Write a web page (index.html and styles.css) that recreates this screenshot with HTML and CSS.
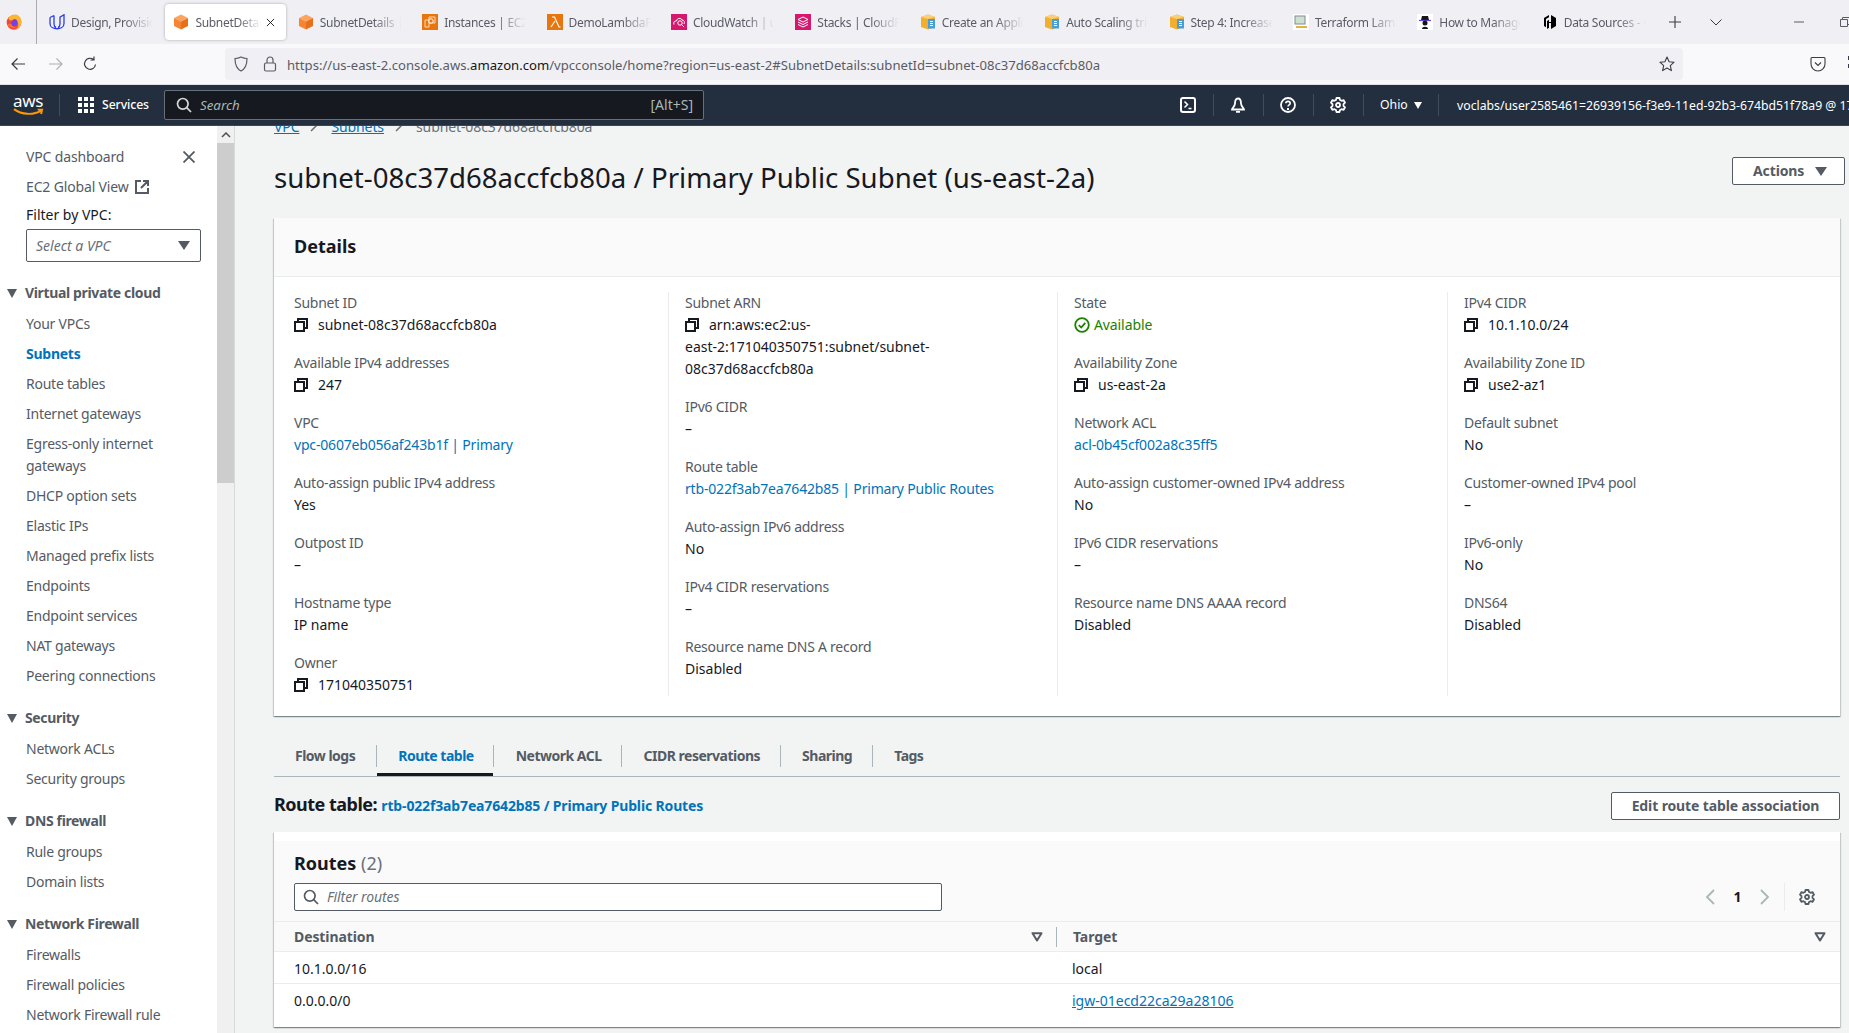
FILE: index.html
```html
<!doctype html>
<html>

<head>
    <meta charset="utf-8">
    <title>SubnetDetails | VPC Console</title>
    <link rel="stylesheet" href="styles.css">
</head>

<body>
    <svg class="defs" width="0" height="0">
        <symbol id="i-cube" viewBox="0 0 16 16">
            <polygon points="8,0.5 15,4 8,7.5 1,4" fill="#ffa45c" />
            <polygon points="1,4 8,7.5 8,15.5 1,12" fill="#f58534" />
            <polygon points="15,4 8,7.5 8,15.5 15,12" fill="#e8701a" />
        </symbol>
        <symbol id="i-doc" viewBox="0 0 16 16">
            <polygon points="8,0.5 15,3 15,13 8,15.5 1,13 1,3" fill="#f2ae2c" />
            <polygon points="8,0.5 15,3 8,5 1,3" fill="#f9cf7c" />
            <rect x="8" y="5" width="7" height="9.5" fill="#4a9ed6" />
            <path d="M10 7.5h3M10 9.5h3M10 11.5h3" stroke="#fff" stroke-width="1" />
        </symbol>
        <symbol id="i-copy" viewBox="0 0 14 14">
            <path d="M4 4V1h9v9h-3" fill="none" stroke="#16191f" stroke-width="2" />
            <rect x="1" y="4" width="9" height="9" fill="none" stroke="#16191f" stroke-width="2" />
        </symbol>
        <symbol id="i-gear" viewBox="0 0 16 16">
            <path d="M6.5 1h3l.5 2 1.6.8 2-.7 1.4 2.6-1.5 1.4v1.8l1.5 1.4-1.4 2.6-2-.7-1.6.8-.5 2h-3l-.5-2-1.6-.8-2 .7L1 10.300l1.500-1.400V7.100L1 5.700l1.400-2.600 2 .7L6 3z" fill="none" stroke="currentColor" stroke-width="1.800" stroke-linejoin="round" />
            <circle cx="8" cy="8" r="2" fill="none" stroke="currentColor" stroke-width="1.800" />
        </symbol>
        <symbol id="i-search" viewBox="0 0 16 16">
            <circle cx="6.800" cy="6.800" r="5.300" fill="none" stroke="currentColor" stroke-width="1.700" />
            <path d="M10.700 10.700 15 15" stroke="currentColor" stroke-width="1.700" />
        </symbol>
        <symbol id="i-sort" viewBox="0 0 12 10">
            <path d="M1.500 1.200h9L6 8.500z" fill="none" stroke="#545b64" stroke-width="2" stroke-linejoin="round" />
        </symbol>
    </svg>

    <div class="tabbar">
        <div class="ff-logo">
            <svg width="16" height="16" viewBox="0 0 17 17">
                <circle cx="8.500" cy="9" r="7.800" fill="#f2473f" />
                <path d="M2.500 5C4 .5 11 -.5 13 1.500c3 2 4 6 3 9-1 3-3 5-5.500 5.800 3-2.300 3.500-6.500.5-9-2-1.500-4.500-1.500-6 0z" fill="#ffb52e" />
                <path d="M8.500 5.300a3.800 3.800 0 1 1-3.700 4.500z" fill="#7542e5" />
                <path d="M1.500 11c1.500 3 6 5 9.500 3-3 0-5-1.500-5.500-4z" fill="#ff7139" />
            </svg>
        </div>

        <div class="tab">
            <svg class="tab-icon" viewBox="0 0 16 16">
                <path d="M1 3.500v6c0 7 14 7 14 0V.8l-4 2.400V10c0 1.800-.8 3-2 3.600M5 1.500v8.500c0 1.800.8 3 2 3.600M1 3.500l4-2" fill="none" stroke="#2b3de8" stroke-width="1.300" />
            </svg>
            <span class="tab-title">Design, Provisio</span>
        </div>
        <div class="tab tab-active">
            <svg class="tab-icon"><use href="#i-cube" /></svg>
            <span class="tab-title">SubnetDetail</span>
            <svg class="tab-close" viewBox="0 0 10 10"><path d="M1 1l8 8M9 1l-8 8" stroke="#15141a" stroke-width="1" /></svg>
        </div>
        <div class="tab">
            <svg class="tab-icon"><use href="#i-cube" /></svg>
            <span class="tab-title">SubnetDetails |</span>
        </div>
        <div class="tab">
            <svg class="tab-icon" viewBox="0 0 16 16">
                <rect width="16" height="16" fill="#e8760f" />
                <path d="M3 6h4v7H3zM7 3h6v6H7z" fill="none" stroke="#ffd9b5" stroke-width="1" />
                <circle cx="9" cy="7" r="2.200" fill="#e8760f" stroke="#fff" stroke-width="1" />
            </svg>
            <span class="tab-title">Instances | EC2</span>
        </div>
        <div class="tab">
            <svg class="tab-icon" viewBox="0 0 16 16">
                <rect width="16" height="16" fill="#e8760f" />
                <path d="M5 3h2.500L12 13h1.500M8 7l-4 6" fill="none" stroke="#fff" stroke-width="1.100" />
            </svg>
            <span class="tab-title">DemoLambdaF</span>
        </div>
        <div class="tab">
            <svg class="tab-icon" viewBox="0 0 16 16">
                <rect width="16" height="16" fill="#d6176e" />
                <path d="M3 10.500c-1-2 .5-4 2.500-3.500C6 4 10 3.500 11 6c2 0 3 2 2 4" fill="none" stroke="#fff" stroke-width="1" />
                <circle cx="9" cy="9" r="2.200" fill="none" stroke="#fff" stroke-width="1" />
                <path d="M10.500 10.500 13 13" stroke="#fff" stroke-width="1" />
            </svg>
            <span class="tab-title">CloudWatch | u</span>
        </div>
        <div class="tab">
            <svg class="tab-icon" viewBox="0 0 16 16">
                <rect width="16" height="16" fill="#d6176e" />
                <path d="M8 3l5 2.500L8 8 3 5.500zM3 8l5 2.500L13 8M3 10.500 8 13l5-2.500" fill="none" stroke="#fff" stroke-width="1" />
            </svg>
            <span class="tab-title">Stacks | CloudF</span>
        </div>
        <div class="tab">
            <svg class="tab-icon"><use href="#i-doc" /></svg>
            <span class="tab-title">Create an Appli</span>
        </div>
        <div class="tab">
            <svg class="tab-icon"><use href="#i-doc" /></svg>
            <span class="tab-title">Auto Scaling tri</span>
        </div>
        <div class="tab">
            <svg class="tab-icon"><use href="#i-doc" /></svg>
            <span class="tab-title">Step 4: Increase</span>
        </div>
        <div class="tab">
            <svg class="tab-icon" viewBox="0 0 16 16">
                <rect width="16" height="16" fill="#fff" />
                <rect x="2" y="2" width="10" height="8" fill="#cfe0d0" stroke="#7d8c9a" stroke-width="1" />
                <path d="M3 13h11" stroke="#e3b341" stroke-width="2" />
            </svg>
            <span class="tab-title">Terraform Lamb</span>
        </div>
        <div class="tab">
            <svg class="tab-icon" viewBox="0 0 16 16">
                <rect width="16" height="16" fill="#fff" />
                <path d="M5 2h6l1 4H4z" fill="#14161a" />
                <path d="M2 6.500h12" stroke="#6a3fd6" stroke-width="1.200" />
                <circle cx="8" cy="9" r="2.500" fill="#14161a" />
                <path d="M5 15c0-3 6-3 6 0z" fill="#14161a" />
            </svg>
            <span class="tab-title">How to Manage</span>
        </div>
        <div class="tab">
            <svg class="tab-icon" viewBox="0 0 16 16">
                <path d="M7 1 2 4v8l2 1.200V5l3-1.800zM9 1l5 3v8l-5 3V9H7v4.800l-2 1.200V7l2-1.200V8h2z" fill="#000" />
            </svg>
            <span class="tab-title">Data Sources - C</span>
        </div>

        <svg class="tab-new" viewBox="0 0 12 12"><path d="M6 0v12M0 6h12" stroke="#3a3a44" stroke-width="1.100" /></svg>
        <svg class="tab-list" viewBox="0 0 12 7"><path d="M.5.500 6 6l5.500-5.500" fill="none" stroke="#3a3a44" stroke-width="1" /></svg>
        <svg class="win-min" viewBox="0 0 10 2"><path d="M0 1h10" stroke="#5b5b66" stroke-width="1" /></svg>
        <svg class="win-max" viewBox="0 0 10 10"><path d="M.5 2.500h7v7h-7zM2.500 2.500v-2h7v7h-2" fill="none" stroke="#5b5b66" stroke-width="1" /></svg>
    </div>

    <div class="toolbar">
        <svg class="tool-back" viewBox="0 0 16 16"><path d="M15 8H2M7.500 2.500 2 8l5.500 5.500" fill="none" stroke="#3a3a44" stroke-width="1.200" /></svg>
        <svg class="tool-forward" viewBox="0 0 16 16"><path d="M1 8h13M8.500 2.500 14 8l-5.500 5.500" fill="none" stroke="#b0b0b6" stroke-width="1.200" /></svg>
        <svg class="tool-reload" viewBox="0 0 16 16"><path d="M13.500 8.500a5.500 5.500 0 1 1-2-5M12 .5v3.500H8.500" fill="none" stroke="#3a3a44" stroke-width="1.200" /></svg>
        <div class="urlbar">
            <svg class="url-shield" viewBox="0 0 16 16"><path d="M8 1c2 1 4 1.500 6 1.500 0 6-1 10-6 12.500C3 12.500 2 8.500 2 2.500 4 2.500 6 2 8 1z" fill="none" stroke="#5b5b66" stroke-width="1.200" /></svg>
            <svg class="url-lock" viewBox="0 0 16 16"><rect x="2.500" y="7" width="11" height="8" rx="1.500" fill="none" stroke="#5b5b66" stroke-width="1.200" /><path d="M5 7V4a3 3 0 0 1 6 0v3" fill="none" stroke="#5b5b66" stroke-width="1.200" /></svg>
            <span class="url-text">https://us-east-2.console.aws.<b>amazon.com</b>/vpcconsole/home?region=us-east-2#SubnetDetails:subnetId=subnet-08c37d68accfcb80a</span>
            <svg class="url-star" viewBox="0 0 16 16"><path d="M8 1l2.100 4.700 5 .5-3.800 3.400 1.100 5L8 12l-4.400 2.600 1.100-5L.9 6.200l5-.5z" fill="none" stroke="#3a3a44" stroke-width="1.100" stroke-linejoin="round" /></svg>
        </div>
        <svg class="tool-pocket" viewBox="0 0 16 16"><path d="M2 1.500h12a1 1 0 0 1 1 1V8a7 7 0 0 1-14 0V2.500a1 1 0 0 1 1-1z" fill="none" stroke="#3a3a44" stroke-width="1.100" /><path d="M5 6.500 8 9.500l3-3" fill="none" stroke="#3a3a44" stroke-width="1.100" /></svg>
        <svg class="tool-extra" viewBox="0 0 16 16"><path d="M0 0h4v4H0zM0 8h4v4H0z" fill="#3a3a44" /></svg>
    </div>

    <nav class="awsnav">
        <div class="aws-logo">
            <span>aws</span>
            <svg viewBox="0 0 32 9"><path d="M1 1c8 6 20 6.500 28 1.500M25.500 1.500l4.500 0-1 4.500" fill="none" stroke="#f90" stroke-width="2" /></svg>
        </div>
        <svg class="nav-grid" viewBox="0 0 16 16">
            <path d="M0 0h4v4H0zM6 0h4v4H6zM12 0h4v4h-4zM0 6h4v4H0zM6 6h4v4H6zM12 6h4v4h-4zM0 12h4v4H0zM6 12h4v4H6zM12 12h4v4h-4z" fill="#fff" />
        </svg>
        <span class="nav-services">Services</span>
        <div class="nav-search">
            <svg class="icon-16"><use href="#i-search" /></svg>
            <span class="nav-placeholder">Search</span>
            <span class="nav-shortcut">[Alt+S]</span>
        </div>
        <div class="nav-tools">
            <div class="nav-tool">
                <svg class="icon-16" viewBox="0 0 16 16"><rect x="1" y="1" width="14" height="14" rx="2" fill="none" stroke="#fff" stroke-width="2" /><path d="M4.500 4.500 7.500 7.500l-3 3M8.500 11.500h3" fill="none" stroke="#fff" stroke-width="1.500" /></svg>
            </div>
            <div class="nav-tool">
                <svg class="icon-16" viewBox="0 0 16 16"><path d="M8 1.500c2.500 0 3 2.500 3 5 0 2.500 3 5 3 6H2c0-1 3-3.500 3-6 0-2.500.5-5 3-5zM6 14.800h4" fill="none" stroke="#fff" stroke-width="1.800" /></svg>
            </div>
            <div class="nav-tool">
                <svg class="icon-16" viewBox="0 0 16 16"><circle cx="8" cy="8" r="7" fill="none" stroke="#fff" stroke-width="1.800" /><path d="M5.800 6.200C6 3.800 10.200 3.800 10.200 6.200c0 1.600-2.200 1.600-2.200 3.300" fill="none" stroke="#fff" stroke-width="1.600" /><path d="M7 11h2v2H7z" fill="#fff" /></svg>
            </div>
            <div class="nav-tool">
                <svg class="icon-16 nav-gear"><use href="#i-gear" /></svg>
            </div>
            <div class="nav-tool nav-region">Ohio<i class="tri tri-white"></i></div>
            <div class="nav-account">voclabs/user2585461=26939156-f3e9-11ed-92b3-674bd51f78a9 @ 1710-4035-0751</div>
        </div>
    </nav>

    <div class="main">
        <aside class="side">
            <div class="side-row">
                <a class="side-link">VPC dashboard</a>
                <svg class="side-close" viewBox="0 0 12 12"><path d="M.5.500l11 11M11.500.500l-11 11" stroke="#545b64" stroke-width="1.800" /></svg>
            </div>
            <a class="side-link side-ec2">EC2 Global View
                <svg class="side-ext" viewBox="0 0 14 14"><path d="M6 1H1v12h12V8M8 1h5v5M13 1 6 8" fill="none" stroke="#545b64" stroke-width="2" /></svg>
            </a>
            <div class="side-filter">Filter by VPC:</div>
            <div class="side-select">
                <span>Select a VPC</span>
                <i class="tri tri-grey"></i>
            </div>

            <div class="side-title"><i class="tri tri-grey"></i>Virtual private cloud</div>
            <ul class="side-list">
                <li>Your VPCs</li>
                <li class="side-active">Subnets</li>
                <li>Route tables</li>
                <li>Internet gateways</li>
                <li>Egress-only internet gateways</li>
                <li>DHCP option sets</li>
                <li>Elastic IPs</li>
                <li>Managed prefix lists</li>
                <li>Endpoints</li>
                <li>Endpoint services</li>
                <li>NAT gateways</li>
                <li>Peering connections</li>
            </ul>

            <div class="side-title"><i class="tri tri-grey"></i>Security</div>
            <ul class="side-list">
                <li>Network ACLs</li>
                <li>Security groups</li>
            </ul>

            <div class="side-title"><i class="tri tri-grey"></i>DNS firewall</div>
            <ul class="side-list">
                <li>Rule groups</li>
                <li>Domain lists</li>
            </ul>

            <div class="side-title"><i class="tri tri-grey"></i>Network Firewall</div>
            <ul class="side-list">
                <li>Firewalls</li>
                <li>Firewall policies</li>
                <li>Network Firewall rule</li>
            </ul>
        </aside>

        <div class="scrollbar">
            <div class="scroll-up">
                <svg viewBox="0 0 10 6"><path d="M1 5l4-4 4 4" fill="none" stroke="#505050" stroke-width="1.500" /></svg>
            </div>
            <div class="scroll-thumb"></div>
        </div>

        <div class="content">
            <div class="crumbs">
                <a class="link">VPC</a>
                <svg class="crumb-sep" viewBox="0 0 10 10"><path d="M1 9 9 1" stroke="#687078" stroke-width="1.500" /></svg>
                <a class="link">Subnets</a>
                <svg class="crumb-sep" viewBox="0 0 10 10"><path d="M1 9 9 1" stroke="#687078" stroke-width="1.500" /></svg>
                <span>subnet-08c37d68accfcb80a</span>
            </div>

            <div class="page-head">
                <h1>subnet-08c37d68accfcb80a / Primary Public Subnet (us-east-2a)</h1>
                <button class="btn btn-actions" type="button">Actions<i class="tri tri-grey"></i></button>
            </div>

            <section class="card">
                <h2 class="card-head">Details</h2>
                <div class="detail-grid">
                    <div class="detail-col">
                        <div class="kv"><label>Subnet ID</label><div><svg class="copy"><use href="#i-copy" /></svg>subnet-08c37d68accfcb80a</div></div>
                        <div class="kv"><label>Available IPv4 addresses</label><div><svg class="copy"><use href="#i-copy" /></svg>247</div></div>
                        <div class="kv"><label>VPC</label><div><a class="link-plain">vpc-0607eb056af243b1f | Primary</a></div></div>
                        <div class="kv"><label>Auto-assign public IPv4 address</label><div>Yes</div></div>
                        <div class="kv"><label>Outpost ID</label><div>–</div></div>
                        <div class="kv"><label>Hostname type</label><div>IP name</div></div>
                        <div class="kv"><label>Owner</label><div><svg class="copy"><use href="#i-copy" /></svg>171040350751</div></div>
                    </div>
                    <div class="detail-col">
                        <div class="kv"><label>Subnet ARN</label><div><svg class="copy"><use href="#i-copy" /></svg>arn:aws:ec2:us-<br>east-2:171040350751:subnet/subnet-<br>08c37d68accfcb80a</div></div>
                        <div class="kv"><label>IPv6 CIDR</label><div>–</div></div>
                        <div class="kv"><label>Route table</label><div><a class="link-plain">rtb-022f3ab7ea7642b85 | Primary Public Routes</a></div></div>
                        <div class="kv"><label>Auto-assign IPv6 address</label><div>No</div></div>
                        <div class="kv"><label>IPv4 CIDR reservations</label><div>–</div></div>
                        <div class="kv"><label>Resource name DNS A record</label><div>Disabled</div></div>
                    </div>
                    <div class="detail-col">
                        <div class="kv"><label>State</label><div class="state">
                            <svg class="state-icon" viewBox="0 0 16 16"><circle cx="8" cy="8" r="6.800" fill="none" stroke="#1d8102" stroke-width="1.800" /><path d="M4.800 8.200 7.200 10.500 11.300 5.800" fill="none" stroke="#1d8102" stroke-width="1.800" /></svg>Available</div></div>
                        <div class="kv"><label>Availability Zone</label><div><svg class="copy"><use href="#i-copy" /></svg>us-east-2a</div></div>
                        <div class="kv"><label>Network ACL</label><div><a class="link-plain">acl-0b45cf002a8c35ff5</a></div></div>
                        <div class="kv"><label>Auto-assign customer-owned IPv4 address</label><div>No</div></div>
                        <div class="kv"><label>IPv6 CIDR reservations</label><div>–</div></div>
                        <div class="kv"><label>Resource name DNS AAAA record</label><div>Disabled</div></div>
                    </div>
                    <div class="detail-col">
                        <div class="kv"><label>IPv4 CIDR</label><div><svg class="copy"><use href="#i-copy" /></svg>10.1.10.0/24</div></div>
                        <div class="kv"><label>Availability Zone ID</label><div><svg class="copy"><use href="#i-copy" /></svg>use2-az1</div></div>
                        <div class="kv"><label>Default subnet</label><div>No</div></div>
                        <div class="kv"><label>Customer-owned IPv4 pool</label><div>–</div></div>
                        <div class="kv"><label>IPv6-only</label><div>No</div></div>
                        <div class="kv"><label>DNS64</label><div>Disabled</div></div>
                    </div>
                </div>
            </section>

            <div class="tabs">
                <a class="tabs-item">Flow logs</a>
                <a class="tabs-item tabs-active">Route table</a>
                <a class="tabs-item">Network ACL</a>
                <a class="tabs-item">CIDR reservations</a>
                <a class="tabs-item">Sharing</a>
                <a class="tabs-item">Tags</a>
            </div>

            <div class="rt-head">
                <div class="rt-title">Route table: <a class="link-plain">rtb-022f3ab7ea7642b85 / Primary Public Routes</a></div>
                <button class="btn btn-edit" type="button">Edit route table association</button>
            </div>

            <section class="card routes">
                <div class="routes-head">
                    <div class="routes-title">Routes <span>(2)</span></div>
                    <div class="routes-filter">
                        <div class="filter-input">
                            <svg class="icon-16"><use href="#i-search" /></svg>
                            <span>Filter routes</span>
                        </div>
                        <div class="pager">
                            <svg class="pager-arrow" viewBox="0 0 10 16"><path d="M9 1 2 8l7 7" fill="none" stroke="#aab7b8" stroke-width="1.800" /></svg>
                            <b>1</b>
                            <svg class="pager-arrow" viewBox="0 0 10 16"><path d="M1 1l7 7-7 7" fill="none" stroke="#aab7b8" stroke-width="1.800" /></svg>
                            <i class="pager-sep"></i>
                            <svg class="icon-16 pager-gear"><use href="#i-gear" /></svg>
                        </div>
                    </div>
                </div>
                <div class="rt-row rt-thead">
                    <div class="rt-dest">Destination<svg class="sort"><use href="#i-sort" /></svg></div>
                    <div class="rt-target">Target<svg class="sort"><use href="#i-sort" /></svg></div>
                </div>
                <div class="rt-row">
                    <div class="rt-dest">10.1.0.0/16</div>
                    <div class="rt-target">local</div>
                </div>
                <div class="rt-row rt-last">
                    <div class="rt-dest">0.0.0.0/0</div>
                    <div class="rt-target"><a class="link">igw-01ecd22ca29a28106</a></div>
                </div>
            </section>
        </div>
    </div>
</body>

</html>
```

FILE: styles.css
```css
* {
    box-sizing: border-box;
}

html,
body {
    height: 100%;
}

body {
    margin: 0;
    overflow: hidden;
    background: #f2f3f3;
    color: #16191f;
    font: 14px/22px "Noto Sans", sans-serif;
}

.defs {
    display: block;
    height: 0;
}

.icon-16 {
    width: 16px;
    height: 16px;
    flex: none;
}

.tri {
    display: inline-block;
    flex: none;
    width: 0;
    height: 0;
    border-left: 6px solid transparent;
    border-right: 6px solid transparent;
}

.tri-grey {
    border-top: 9px solid #545b64;
}

.tri-white {
    border-left-width: 4px;
    border-right-width: 4px;
    border-top: 7px solid #fff;
}

/* browser chrome */
.tabbar {
    display: flex;
    align-items: center;
    height: 44px;
    background: #f0f0f4;
    font: 12px/16px "Noto Sans", sans-serif;
    letter-spacing: -.3px;
    color: #5b5b66;
}

.ff-logo {
    display: flex;
    flex: none;
    align-items: center;
    width: 37px;
    height: 44px;
    padding-left: 6px;
    border-right: 1px solid #aaaab0;
    margin-right: 4px;
}

.tab {
    display: flex;
    flex: none;
    align-items: center;
    width: 124.4px;
    height: 36px;
    padding-left: 8px;
    border-radius: 4px;
}

.tab-active {
    background: #fff;
    width: 121px;
    margin-right: 3.4px;
    box-shadow: 0 0 3px rgba(0, 0, 0, .3);
}

.tab-icon {
    width: 16px;
    height: 16px;
    flex: none;
    margin-right: 6px;
}

.tab-title {
    width: 82px;
    margin-top: 2px;
    overflow: hidden;
    white-space: nowrap;
    -webkit-mask-image: linear-gradient(to right, #000 65%, transparent);
    mask-image: linear-gradient(to right, #000 65%, transparent);
}

.tab-active .tab-title {
    width: 66px;
}

.tab-close {
    flex: none;
    width: 9px;
    height: 9px;
    margin-left: 5px;
}

.tab-new {
    flex: none;
    width: 12px;
    height: 12px;
    margin-left: 11px;
}

.tab-list {
    flex: none;
    width: 12px;
    height: 7px;
    margin-left: 29px;
}

.win-min {
    flex: none;
    width: 10px;
    height: 2px;
    margin-left: 72px;
}

.win-max {
    width: 10px;
    height: 10px;
    flex: none;
    margin-left: 36px;
}

.toolbar {
    display: flex;
    align-items: center;
    height: 41px;
    padding-left: 10px;
    background: #f9f9fb;
    border-bottom: 1px solid #e0e0e6;
}

.toolbar > svg {
    width: 16px;
    height: 16px;
    flex: none;
}

.tool-forward {
    margin-left: 22px;
}

.tool-reload {
    margin-left: 18px;
}

.urlbar {
    display: flex;
    flex: none;
    align-items: center;
    width: 1458px;
    height: 32px;
    margin-left: 127px;
    padding: 0 8px;
    background: #f0f0f4;
    border-radius: 4px;
    color: #5b5b66;
    font: 13.120px/20px "Noto Sans", sans-serif;
}

.urlbar b {
    color: #15141a;
    font-weight: 400;
}

.urlbar svg {
    width: 16px;
    height: 16px;
    flex: none;
}

.url-lock {
    margin-left: 13px;
}

.url-text {
    margin: 2px 0 0 9px;
    white-space: nowrap;
}

.url-star {
    margin-left: auto;
    margin-right: 0;
}

.toolbar .tool-pocket {
    margin-left: 127px;
}

.toolbar .tool-extra {
    margin-left: 22px;
}

/* aws top nav */
.awsnav {
    display: flex;
    align-items: center;
    height: 41px;
    background: #232f3e;
    border-bottom: 1px solid #3a4655;
    color: #fff;
    font-size: 12.250px;
    overflow: hidden;
    white-space: nowrap;
}

.aws-logo {
    position: relative;
    flex: none;
    width: 60px;
    height: 22px;
    margin-right: 18px;
    padding-left: 13px;
    border-right: 1px solid #414d5c;
}

.aws-logo span {
    display: block;
    font-size: 17px;
    line-height: 13px;
    letter-spacing: -.3px;
}

.aws-logo svg {
    display: block;
    width: 31px;
    height: 9px;
    margin-top: 1px;
}

.nav-grid {
    width: 16px;
    height: 16px;
    flex: none;
    margin-right: 8px;
}

.nav-services {
    flex: none;
    width: 62px;
    font-weight: 500;
    letter-spacing: -.1px;
}

.nav-search {
    display: flex;
    flex: none;
    align-items: center;
    width: 540px;
    height: 30px;
    padding: 0 10px 0 11px;
    background: #16191f;
    border: 1px solid #687078;
    border-radius: 2px;
    color: #d5dbdb;
    font-size: 14px;
}

.nav-placeholder {
    margin-left: 8px;
    font-size: 13.300px;
    font-style: italic;
    color: #aab7b8;
}

.nav-shortcut {
    margin-left: auto;
    font-size: 14px;
    color: #aab7b8;
}

.nav-tools {
    display: flex;
    flex: none;
    align-items: center;
    margin-left: 463px;
}

.nav-tool {
    display: flex;
    flex: none;
    align-items: center;
    justify-content: center;
    height: 22px;
    width: 42px;
    margin-right: 8px;
    position: relative;
}

.nav-tool::after {
    content: "";
    position: absolute;
    right: -5px;
    top: 0;
    bottom: 0;
    border-right: 1px solid #414d5c;
}

.nav-gear {
    color: #fff;
}

.nav-region {
    width: 72px;
    margin-right: 0;
    justify-content: flex-start;
    padding-left: 13px;
    gap: 6px;
}

.nav-region::after {
    right: 0;
}

.nav-account {
    padding: 2px 0 0 18px;
}

/* main area */
.main {
    display: flex;
    height: 907px;
    overflow: hidden;
}

.side {
    flex: none;
    width: 217px;
    height: 100%;
    padding-top: 20px;
    overflow: hidden;
    background: #fff;
    color: #545b64;
}

.side-row {
    display: flex;
    align-items: center;
    justify-content: space-between;
    padding: 0 22px 0 26px;
}

.side-link {
    letter-spacing: -.15px;
}

.side-close {
    width: 12px;
    height: 12px;
}

.side-ec2 {
    display: flex;
    align-items: center;
    gap: 6px;
    margin: 8px 0 0 26px;
}

.side-ext {
    width: 14px;
    height: 14px;
}

.side-filter {
    margin: 6px 0 0 26px;
    color: #16191f;
}

.side-select {
    display: flex;
    align-items: center;
    justify-content: space-between;
    width: 175px;
    height: 33px;
    margin: 3px 0 0 26px;
    padding: 0 10px 0 9px;
    border: 1px solid #545b64;
    border-radius: 2px;
    font-style: italic;
    color: #687078;
}

.side-title {
    display: flex;
    align-items: center;
    margin: 20px 0 9px;
    padding-left: 7px;
    font-weight: 700;
    font-size: 14px;
    letter-spacing: -.35px;
}

.side-title .tri {
    margin-right: 8px;
    border-left-width: 5.500px;
    border-right-width: 5.500px;
}

.side-list {
    display: flex;
    flex-direction: column;
    gap: 8px;
    margin: 0;
    padding: 0 20px 0 26px;
    list-style: none;
    letter-spacing: -.25px;
}

.side-active {
    color: #0073bb;
    font-weight: 700;
}

.scrollbar {
    display: flex;
    flex: none;
    flex-direction: column;
    width: 18px;
    background: #f0f0f0;
    border-right: 1px solid #d5dbdb;
}

.scroll-up {
    display: flex;
    align-items: center;
    justify-content: center;
    height: 17px;
}

.scroll-up svg {
    width: 10px;
    height: 6px;
}

.scroll-thumb {
    height: 340px;
    background: #cdcdcd;
}

.content {
    flex: none;
    width: 1614px;
    padding: 0 9px 0 39px;
}

.link {
    color: #0073bb;
    text-decoration: underline;
}

.link-plain {
    color: #0073bb;
    letter-spacing: -.18px;
}

.crumbs {
    display: flex;
    align-items: center;
    height: 22px;
    margin-top: -10px;
    color: #687078;
    letter-spacing: -.1px;
}

.crumb-sep {
    width: 10px;
    height: 10px;
    margin: 0 11px;
}

.page-head {
    display: flex;
    justify-content: space-between;
    align-items: flex-start;
    height: 40px;
    margin: 19px -5px 21px 0;
}

h1 {
    margin: 0;
    font-size: 27.600px;
    line-height: 40px;
    font-weight: 400;
}

.btn {
    height: 28px;
    border: 1px solid #545b64;
    border-radius: 2px;
    background: #fff;
    color: #545b64;
    font: 700 14px/22px "Noto Sans", sans-serif;
    letter-spacing: -.12px;
}

.btn-actions {
    display: flex;
    align-items: center;
    justify-content: space-between;
    width: 113px;
    padding: 0 17px 0 20px;
}

.btn-edit {
    width: 229px;
    padding: 0;
}

.card {
    background: #fff;
    box-shadow: 0 1px 1px 0 rgba(0, 28, 36, .3), 1px 1px 1px 0 rgba(0, 28, 36, .15), -1px 1px 1px 0 rgba(0, 28, 36, .15);
}

.card-head {
    height: 59px;
    margin: 0;
    padding: 0 20px;
    background: #fafafa;
    border-bottom: 1px solid #eaeded;
    font-size: 18px;
    line-height: 56px;
    font-weight: 700;
}

.detail-grid {
    display: grid;
    grid-template-columns: 394px 389px 390px 1fr;
    padding: 15px 0 20px;
}

.detail-col {
    display: flex;
    flex-direction: column;
    gap: 16px;
    padding-left: 16px;
    border-left: 1px solid #eaeded;
}

.detail-col:first-child {
    padding-left: 20px;
    border-left: 0;
}

.kv label {
    display: block;
    color: #545b64;
    letter-spacing: -.25px;
}

.copy {
    width: 14px;
    height: 14px;
    margin-right: 10px;
    vertical-align: -2px;
}

.state {
    display: flex;
    align-items: center;
    gap: 4px;
    color: #1d8102;
    letter-spacing: -.1px;
}

.state-icon {
    width: 16px;
    height: 16px;
}

.tabs {
    display: flex;
    align-items: flex-start;
    height: 41px;
    margin-top: 20px;
    padding-top: 9px;
    border-bottom: 1px solid #aab7b8;
}

.tabs-item {
    position: relative;
    height: 22px;
    padding: 0 19.500px 0 21.500px;
    border-right: 1px solid #aab7b8;
    color: #545b64;
    font-weight: 700;
    letter-spacing: -.5px;
    white-space: nowrap;
}

.tabs-item:first-child {
    padding: 0 20.500px 0 21px;
}

.tabs-item:last-child {
    border-right: 0;
}

.tabs-active {
    color: #0073bb;
}

.tabs-active::after {
    content: "";
    position: absolute;
    left: 0;
    right: 0;
    bottom: -9px;
    height: 3px;
    background: #16191f;
}

.rt-head {
    display: flex;
    align-items: center;
    justify-content: space-between;
    height: 28px;
    margin-top: 15px;
}

.rt-title {
    margin-top: -2px;
    font-size: 18px;
    font-weight: 700;
    letter-spacing: -.5px;
}

.rt-title a {
    font-size: 14px;
    letter-spacing: -.15px;
}

.routes {
    margin-top: 12px;
    padding-top: 9px;
}

.routes-head {
    height: 81px;
    padding: 11px 25px 0 20px;
    background: #fafafa;
    border-bottom: 1px solid #eaeded;
}

.routes-title {
    font-size: 18px;
    font-weight: 700;
}

.routes-title span {
    color: #687078;
    font-weight: 400;
}

.routes-filter {
    display: flex;
    align-items: center;
    justify-content: space-between;
    margin-top: 9px;
}

.filter-input {
    display: flex;
    align-items: center;
    gap: 8px;
    width: 648px;
    height: 28px;
    padding-left: 8px;
    background: #fff;
    border: 1px solid #545b64;
    border-radius: 2px;
    color: #545b64;
}

.filter-input span {
    font-style: italic;
    color: #687078;
    letter-spacing: -.1px;
}

.pager {
    display: flex;
    align-items: center;
    height: 28px;
}

.pager b {
    width: 45px;
    text-align: center;
}

.pager-arrow {
    width: 10px;
    height: 16px;
}

.pager-sep {
    height: 28px;
    margin: 0 14px;
    border-left: 1px solid #eaeded;
}

.pager-gear {
    color: #545b64;
}

.rt-row {
    display: flex;
    align-items: center;
    height: 32px;
    padding-top: 2px;
    border-bottom: 1px solid #eaeded;
}

.rt-thead {
    height: 30px;
    padding-top: 0;
    background: #fafafa;
    color: #545b64;
    font-weight: 700;
    letter-spacing: -.1px;
}

.rt-last {
    height: 43px;
    align-items: flex-start;
    padding-top: 6px;
    border-bottom: 0;
}

.rt-dest {
    display: flex;
    align-items: center;
    justify-content: space-between;
    width: 782px;
    padding: 0 13px 0 20px;
}

.rt-target {
    display: flex;
    flex: 1;
    align-items: center;
    justify-content: space-between;
    padding: 0 14px 0 16px;
}

.rt-thead .rt-target {
    border-left: 1px solid #aab7b8;
    height: 20px;
}

.sort {
    width: 12px;
    height: 10px;
}
```
